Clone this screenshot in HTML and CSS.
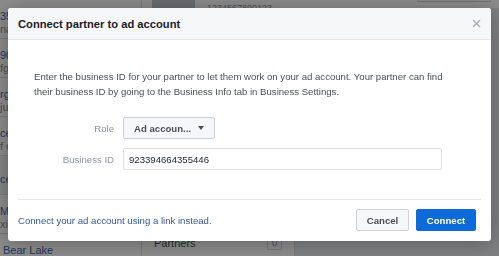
FILE: index.html
```html
<!DOCTYPE html>
<html>
<head>
<meta charset="utf-8">
<link rel="stylesheet" href="styles.css">
</head>
<body>
<div class="page">
  <aside class="list">
    <div class="item"><div class="name">35</div><div class="sub">na</div></div>
    <div class="item"><div class="name">90</div><div class="sub">fg</div></div>
    <div class="item"><div class="name">rg</div><div class="sub">ju</div></div>
    <div class="item"><div class="name">ce</div><div class="sub">f c</div></div>
    <div class="item sel"><div class="name">ce</div></div>
    <div class="item"><div class="name">M</div><div class="sub">xi</div></div>
    <div class="item last"><div class="name bear">Bear Lake</div></div>
  </aside>
  <main class="main">
    <div class="topbar">
      <div class="tile"></div>
      <span class="ids">1234567890123</span>
      <span class="topbtn"></span>
    </div>
    <div class="content">
      <section class="panel">
        <div class="prow"><span class="plabel">Partners</span><span class="count">0</span></div>
      </section>
    </div>
  </main>
</div>
<div class="overlay"></div>
<div class="dialog">
  <header class="dhead">
    <h1 class="title">Connect partner to ad account</h1>
    <svg class="close" width="9" height="9" viewBox="0 0 9 9"><path d="M1 1L8 8M8 1L1 8" stroke="#a8abb0" stroke-width="1.4" fill="none"/></svg>
  </header>
  <div class="dbody">
    <p class="intro">Enter the business ID for your partner to let them work on your ad account. Your partner can find their business ID by going to the Business Info tab in Business Settings.</p>
    <div class="form">
      <label class="lbl">Role</label>
      <div><button class="select">Ad accoun... <span class="caret"></span></button></div>
      <label class="lbl">Business ID</label>
      <div class="input">923394664355446</div>
    </div>
    <div class="footer">
      <a class="link">Connect your ad account using a link instead.</a>
      <div class="btns">
        <button class="btn cancel">Cancel</button>
        <button class="btn connect">Connect</button>
      </div>
    </div>
  </div>
</div>
</body>
</html>
```
FILE: styles.css
```css
html, body {
  margin: 0;
  padding: 0;
  width: 499px;
  height: 256px;
  overflow: hidden;
  font-family: "Liberation Sans", Arial, sans-serif;
}
.page {
  display: flex;
  width: 499px;
  height: 256px;
  overflow: hidden;
  background: #e9ebee;
}
.list {
  width: 141px;
  border-right: 1px solid #dddfe2;
  background: #fff;
  display: flex;
  flex-direction: column;
  overflow: hidden;
}
.item {
  height: 39px;
  flex: none;
  border-bottom: 1px solid #dddfe2;
  padding: 10px 0 0 0;
  box-sizing: border-box;
  font-size: 11px;
  line-height: 13px;
}
.item.sel { background: #f2f3f5; padding-top: 17px; }
.item.last { border-bottom: none; flex: 1 1 auto; height: auto; min-height: 0; }
.name { color: #4267b2; }
.sub { color: #90949c; }
.bear { padding-left: 3px; }
.main {
  flex: 1;
  display: flex;
  flex-direction: column;
}
.topbar {
  height: 8px;
  flex: none;
  display: flex;
  align-items: flex-start;
  background: #fff;
  overflow: hidden;
  padding-left: 10px;
}
.tile {
  width: 43px;
  height: 8px;
  background: #c4c8ce;
}
.ids {
  margin-left: 12px;
  margin-top: 4px;
  font-size: 9px;
  line-height: 9px;
  color: #90949c;
}
.topbtn {
  margin-left: auto;
  margin-right: 8px;
  width: 72px;
  height: 1px;
  border: 1px solid #ccd0d5;
  border-top: none;
  border-radius: 0 0 2px 2px;
}
.content {
  flex: 1;
  display: flex;
}
.panel {
  width: 152px;
  background: #fff;
  border-right: 1px solid #dddfe2;
  display: flex;
  flex-direction: column;
  justify-content: flex-end;
}
.prow {
  display: flex;
  align-items: center;
  padding: 0 12px;
  height: 14px;
  margin-bottom: 6px;
}
.plabel { font-size: 11px; color: #4b4f56; }
.count {
  margin-left: auto;
  width: 13px;
  height: 12px;
  line-height: 12px;
  border: 1px solid #dddfe2;
  font-size: 10px;
  text-align: center;
  color: #90949c;
}
.overlay {
  position: fixed;
  inset: 0;
  background: rgba(0, 0, 0, 0.45);
}
.dialog {
  position: absolute;
  left: 8px;
  top: 8px;
  width: 483px;
  height: 233px;
  background: #fff;
  border-radius: 3px;
  box-shadow: 0 2px 20px rgba(0, 0, 0, 0.3);
  display: flex;
  flex-direction: column;
}
.dhead {
  height: 31px;
  border-bottom: 1px solid #e5e5e5;
  background: #f6f7f9;
  border-radius: 3px 3px 0 0;
  display: flex;
  align-items: center;
  justify-content: space-between;
  padding: 0 10px;
}
.title {
  margin: 0;
  font-size: 11.2px;
  font-weight: bold;
  color: #1d2129;
}
.dbody {
  padding: 0 10px;
  display: flex;
  flex-direction: column;
}
.intro {
  margin: 0;
  padding: 29px 24px 0 16px;
  font-size: 9.6px;
  line-height: 15px;
  color: #4b4f56;
}
.form {
  margin-top: 18px;
  padding-left: 16px;
  display: grid;
  grid-template-columns: 80px 319px;
  column-gap: 9px;
  row-gap: 9px;
  align-items: center;
}
.lbl {
  text-align: right;
  font-size: 9.6px;
  color: #90949c;
}
.select {
  height: 22px;
  width: 92px;
  padding: 0 0 0 10px;
  display: flex;
  align-items: center;
  background: #f6f7f9;
  border: 1px solid #ced0d4;
  border-radius: 2px;
  font-family: inherit;
  font-size: 9.6px;
  font-weight: bold;
  color: #4b4f56;
  box-sizing: border-box;
}
.caret {
  margin-left: auto;
  margin-right: 10px;
  width: 0;
  height: 0;
  border-left: 3.5px solid transparent;
  border-right: 3.5px solid transparent;
  border-top: 4px solid #4b4f56;
}
.input {
  height: 22px;
  box-sizing: border-box;
  border: 1px solid #dddfe2;
  border-radius: 2px;
  padding-left: 5px;
  display: flex;
  align-items: center;
  font-size: 9.6px;
  color: #1d2129;
}
.footer {
  margin-top: 29px;
  border-top: 1px solid #e5e5e5;
  padding: 9px 5px 10px 0;
  display: flex;
  align-items: center;
  justify-content: space-between;
}
.link {
  font-size: 9.6px;
  color: #365899;
}
.btns {
  display: flex;
  gap: 7px;
}
.btn {
  height: 22px;
  box-sizing: border-box;
  border-radius: 2px;
  font-family: inherit;
  font-size: 9.6px;
  font-weight: bold;
  padding: 0;
}
.cancel {
  width: 53px;
  background: #f6f7f9;
  border: 1px solid #ced0d4;
  color: #4b4f56;
}
.connect {
  width: 60px;
  background: #0e6ad8;
  border: 1px solid #0e6ad8;
  color: #fff;
}
```
